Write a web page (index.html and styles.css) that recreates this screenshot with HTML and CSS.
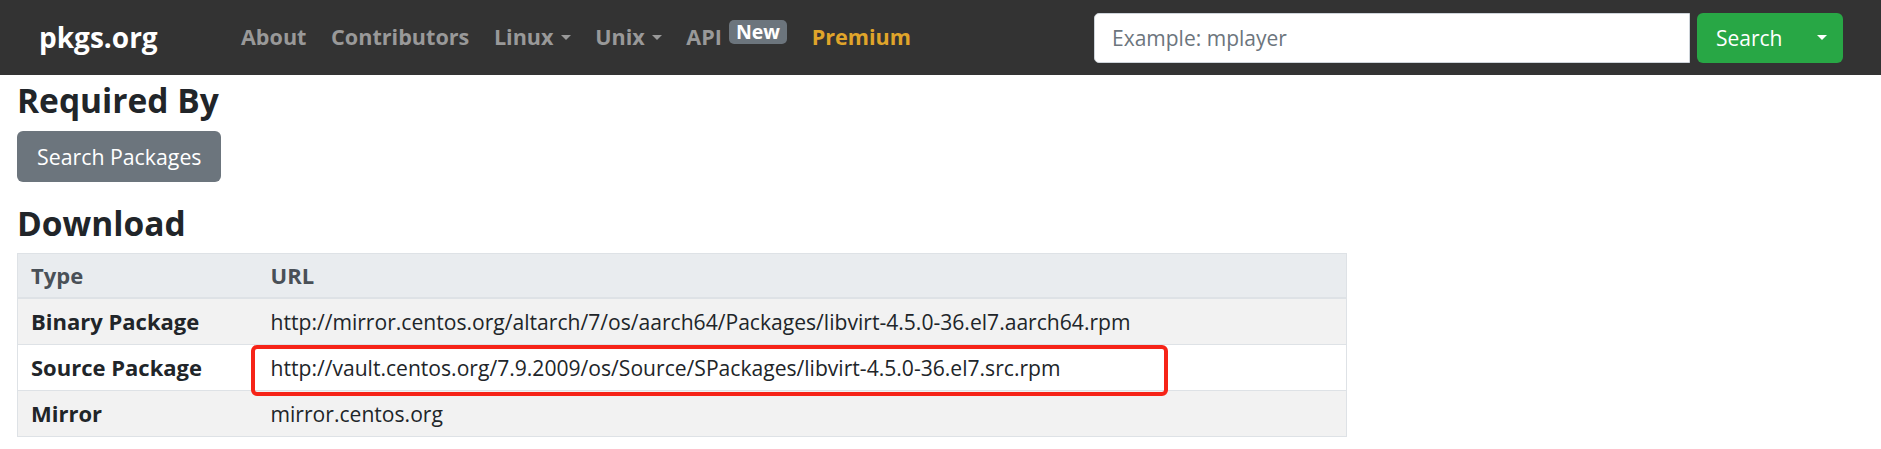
FILE: index.html
```html
<!DOCTYPE html>
<html lang="en">
<head>
<meta charset="utf-8">
<title>pkgs.org</title>
<link rel="stylesheet" href="styles.css">
</head>
<body>
<nav class="navbar">
  <a class="brand" href="#">pkgs.org</a>
  <ul class="nav">
    <li><a class="nav-link" href="#">About</a></li>
    <li><a class="nav-link" href="#">Contributors</a></li>
    <li><a class="nav-link dropdown" href="#">Linux</a></li>
    <li><a class="nav-link dropdown" href="#">Unix</a></li>
    <li><a class="nav-link" href="#">API<span class="badge">New</span></a></li>
    <li><a class="nav-link premium" href="#">Premium</a></li>
  </ul>
  <form class="search">
    <input class="search-input" type="text" placeholder="Example: mplayer">
    <button class="btn-search" type="button">Search<span class="caret"></span></button>
  </form>
</nav>
<main class="content">
  <h3 class="heading">Required By</h3>
  <a class="btn-secondary" href="#">Search Packages</a>
  <h3 class="heading heading-download">Download</h3>
  <div class="table-wrap">
    <table class="table">
      <thead>
        <tr><th class="col-type">Type</th><th>URL</th></tr>
      </thead>
      <tbody>
        <tr class="odd"><th>Binary Package</th><td>http://mirror.centos.org/altarch/7/os/aarch64/Packages/libvirt-4.5.0-36.el7.aarch64.rpm</td></tr>
        <tr><th>Source Package</th><td>http://vault.centos.org/7.9.2009/os/Source/SPackages/libvirt-4.5.0-36.el7.src.rpm</td></tr>
        <tr class="odd"><th>Mirror</th><td>mirror.centos.org</td></tr>
      </tbody>
    </table>
    <div class="highlight"></div>
  </div>
</main>
</body>
</html>
```
FILE: styles.css
```css
* { box-sizing: border-box; }
body {
  margin: 0;
  font-family: "Open Sans", "Noto Sans", sans-serif;
  font-size: 21px;
  color: #212529;
  background: #fff;
}
a { text-decoration: none; }

.navbar {
  display: flex;
  align-items: center;
  height: 75px;
  background: #333333;
  padding: 0 38px 0 39px;
}
.brand {
  color: #fff;
  font-weight: 700;
  font-size: 28px;
  margin-right: 71px;
  margin-top: -1px;
}
.nav {
  display: flex;
  align-items: center;
  list-style: none;
  margin: 0;
  padding: 0;
}
.nav-link {
  display: flex;
  align-items: center;
  padding: 0 12.3px;
  color: #999999;
  font-weight: 700;
  font-size: 21.6px;
  margin-top: -2px;
}
.dropdown::after {
  content: "";
  display: inline-block;
  margin-left: 7px;
  margin-top: 2px;
  border-top: 5px solid #999999;
  border-left: 5px solid transparent;
  border-right: 5px solid transparent;
}
.badge {
  display: inline-block;
  margin-left: 7px;
  padding: 0 7px;
  height: 24px;
  line-height: 24px;
  font-size: 19.5px;
  font-weight: 700;
  color: #fff;
  background: #6c757d;
  border-radius: 5px;
  position: relative;
  top: -5px;
}
.premium { color: #e0a52a; }

.search {
  margin-left: auto;
  display: flex;
  align-items: center;
  gap: 7px;
}
.search-input {
  width: 596px;
  height: 50px;
  border: 1px solid #ced4da;
  border-radius: 5px 0 0 5px;
  padding: 0 17px;
  font-family: inherit;
  font-size: 21px;
  color: #495057;
  outline: none;
}
.search-input::placeholder { color: #6c757d; }
.btn-search {
  display: flex;
  align-items: center;
  width: 146px;
  height: 50px;
  border: none;
  border-radius: 6px;
  background: #28a745;
  color: #fff;
  font-family: inherit;
  font-size: 21px;
  padding: 0 16px 0 19px;
}
.caret {
  margin-left: auto;
  border-top: 5px solid #fff;
  border-left: 5px solid transparent;
  border-right: 5px solid transparent;
}

.content { padding: 0 17px; }
.heading {
  margin: 5px 0 11px;
  font-size: 33.5px;
  font-weight: 700;
  line-height: 1.2;
}
.heading-download { margin: 21px 0 10px; }
.btn-secondary {
  display: inline-flex;
  align-items: center;
  height: 51px;
  padding: 0 19px 0 20px;
  background: #6c757d;
  color: #fff;
  border-radius: 6px;
  font-size: 21.3px;
}

.table-wrap {
  position: relative;
  width: 1330px;
}
.table {
  width: 100%;
  border-collapse: collapse;
  border: 1px solid #dee2e6;
  font-size: 21.1px;
}
.table th, .table td {
  text-align: left;
  line-height: 23px;
  padding: 11px 13px;
  border-top: 1px solid #dee2e6;
}
.table th { font-size: 22px; }
.table thead th {
  background: #e9ecef;
  color: #495057;
  padding: 10px 13px;
  border-bottom: 2px solid #dee2e6;
}
.col-type { width: 240px; }
.table tbody th { font-weight: 700; }
.table td { font-weight: 400; }
.odd { background: #f2f2f2; }
.highlight {
  position: absolute;
  left: 234px;
  top: 92px;
  width: 917px;
  height: 51px;
  border: 4px solid #f62418;
  border-radius: 6px;
}
```
